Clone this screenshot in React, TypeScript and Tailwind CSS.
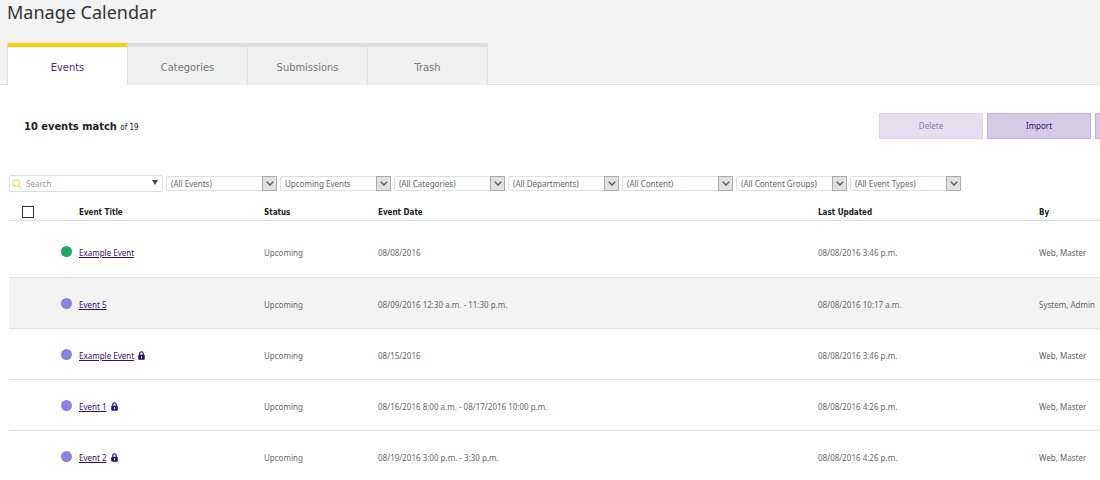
import { useState } from 'react'
import { clsx } from 'clsx'

type CalendarEvent = {
  id: number
  title: string
  date: string
  updated: string
  by: string
  live?: boolean
  locked?: boolean
}

const TABS = ['Events', 'Categories', 'Submissions', 'Trash']

// label for assistive tech + the option shown
const FILTERS = [
  { label: 'Events', value: '(All Events)' },
  { label: 'Time', value: 'Upcoming Events' },
  { label: 'Categories', value: '(All Categories)' },
  { label: 'Departments', value: '(All Departments)' },
  { label: 'Content', value: '(All Content)' },
  { label: 'Content groups', value: '(All Content Groups)' },
  { label: 'Event types', value: '(All Event Types)' },
]

const EVENTS: CalendarEvent[] = [
  { id: 1, title: 'Example Event', date: '08/08/2016', updated: '08/08/2016 3:46 p.m.', by: 'Web, Master', live: true },
  { id: 2, title: 'Event 5', date: '08/09/2016 12:30 a.m. - 11:30 p.m.', updated: '08/08/2016 10:17 a.m.', by: 'System, Admin' },
  { id: 3, title: 'Example Event', date: '08/15/2016', updated: '08/08/2016 3:46 p.m.', by: 'Web, Master', locked: true },
  { id: 4, title: 'Event 1', date: '08/16/2016 8:00 a.m. - 08/17/2016 10:00 p.m.', updated: '08/08/2016 4:26 p.m.', by: 'Web, Master', locked: true },
  { id: 5, title: 'Event 2', date: '08/19/2016 3:00 p.m. - 3:30 p.m.', updated: '08/08/2016 4:26 p.m.', by: 'Web, Master', locked: true },
]

function LockIcon() {
  return (
    <svg className="ml-1 inline-block h-[9px] w-[7px] align-[-1px]" viewBox="0 0 14 18" aria-label="Locked">
      <path d="M3.5 9V5a3.5 3.5 0 0 1 7 0v4" fill="none" stroke="#3a1a70" strokeWidth="2.4" />
      <rect x="0.5" y="7.5" width="13" height="10" rx="1.5" fill="#32106a" />
      <path d="M7 10.5v4" stroke="#fff" strokeWidth="2" />
    </svg>
  )
}

function Filter({ label, value }: { label: string; value: string }) {
  return (
    <div className="relative h-[15px] w-[111px] shrink-0">
      <select
        aria-label={label}
        defaultValue={value}
        className="block h-full w-full appearance-none rounded-xs border border-[#dedede] bg-white pr-4 pl-1 text-[8px] leading-[13px] text-[#666]"
      >
        <option>{value}</option>
      </select>
      <span className="pointer-events-none absolute top-0 right-0 flex h-full w-[15px] items-center justify-center border border-[#acacac] bg-[#e1e1e1]">
        <svg className="h-[5px] w-[8px]" viewBox="0 0 8 5" fill="none" stroke="#555" strokeWidth="1.3">
          <path d="M0.8 0.8 4 4 7.2 0.8" />
        </svg>
      </span>
    </div>
  )
}

export default function App() {
  const [tab, setTab] = useState('Events')
  const [search, setSearch] = useState('')

  return (
    <div className="overflow-hidden bg-white font-['Noto_Sans','Open_Sans',sans-serif] text-[#666]">
      <header className="border-b border-[#dedede] bg-[#f3f3f3]">
        <h1 className="pl-[7px] text-[18px] leading-[25px] text-[#333]">Manage Calendar</h1>

        {/* Tabs sit over the header's bottom border */}
        <nav className="mt-[18px] -mb-px flex pl-2">
          {TABS.map(t => (
            <button
              key={t}
              type="button"
              onClick={() => setTab(t)}
              className={clsx(
                "h-[42px] w-[120px] border-t-4 border-r border-r-[#dedede] pt-1 font-['DejaVu_Sans_Condensed','DejaVu_Sans',sans-serif] text-[11px]",
                t === tab
                  ? 'border-t-[#ffcc0a] bg-white text-[#4b2a85] shadow-[-1px_0_0_#dedede]'
                  : 'border-t-[#dcdcdc] bg-[#f0f0f0] text-[#777]',
              )}
            >
              {t}
            </button>
          ))}
        </nav>
      </header>

      <div className="flex items-center justify-between pt-7 pl-6">
        <h2 className="pt-0.5 font-['DejaVu_Sans_Condensed','DejaVu_Sans',sans-serif] text-[11px] leading-[16px] font-bold text-[#222]">
          10 events match <span className="text-[8px] font-normal">of 19</span>
        </h2>
        {/* Action bar runs past the right edge of the window */}
        <div className="flex w-[221px] gap-1 overflow-hidden text-[8px]">
          <button
            type="button"
            disabled
            className="h-[26px] w-[104px] shrink-0 border border-[#ded3ee] bg-[#e6dff0] text-[#9279ab]"
          >
            Delete
          </button>
          <button type="button" className="h-[26px] w-[104px] shrink-0 border border-[#c0b2e0] bg-[#d5cbe7] text-[#32106a]">
            Import
          </button>
          <button
            type="button"
            aria-label="Add event"
            className="h-[26px] w-[104px] shrink-0 border border-[#c0b2e0] bg-[#d5cbe7]"
          />
        </div>
      </div>

      <div className="mt-9 flex items-center gap-[3px] pl-[9px]">
        <div className="flex h-[17px] w-[154px] shrink-0 items-center rounded-xs border border-[#dedede] px-[2px]">
          <svg className="h-[10px] w-[10px] shrink-0" viewBox="0 0 10 10" fill="none" stroke="#ffdc5e" strokeWidth="1.2">
            <circle cx="4.2" cy="4.2" r="3.3" />
            <path d="m6.6 6.6 2.9 2.9" />
          </svg>
          <input
            type="text"
            aria-label="Search"
            placeholder="Search"
            value={search}
            onChange={e => setSearch(e.target.value)}
            className="ml-1 min-w-0 flex-1 text-[8px] leading-[13px] outline-none placeholder:text-[#999]"
          />
          <button type="button" aria-label="Search options" className="flex shrink-0 pr-0.5 pb-0.5">
            <svg className="h-[5px] w-[6px]" viewBox="0 0 6 5" fill="#444">
              <path d="M0 0h6L3 5z" />
            </svg>
          </button>
        </div>
        {FILTERS.map(f => (
          <Filter key={f.label} label={f.label} value={f.value} />
        ))}
      </div>

      <div className="mt-3 pl-[9px]">
        <table className="w-full table-fixed text-left text-[8px] leading-[12px]">
          <colgroup>
            <col className="w-[70px]" />
            <col className="w-[185px]" />
            <col className="w-[114px]" />
            <col />
            <col className="w-[221px]" />
            <col className="w-[61px]" />
          </colgroup>
          <thead className="font-['DejaVu_Sans_Condensed','DejaVu_Sans',sans-serif]">
            <tr className="h-[16px] border-b border-[#dedede] text-[#222] [&>th]:pt-0.5">
              <th className="pl-[13px]">
                <input
                  type="checkbox"
                  aria-label="Select all events"
                  className="mb-0.5 block h-3 w-3 appearance-none border border-[#333] bg-white checked:bg-[#32106a]"
                />
              </th>
              <th>Event Title</th>
              <th>Status</th>
              <th>Event Date</th>
              <th>Last Updated</th>
              <th>By</th>
            </tr>
          </thead>
          <tbody className="[&>tr>td]:h-[51px] [&>tr>td]:pt-1 [&>tr:first-child>td]:h-[57px] [&>tr:first-child>td]:pt-2">
            {EVENTS.map((event, i) => (
              <tr key={event.id} className={clsx('border-b border-[#dedede]', i === 1 && 'bg-[#f3f3f3]')}>
                <td>
                  <span
                    className={clsx(
                      'mr-[7px] mb-1 ml-auto block h-[11px] w-[11px] rounded-full',
                      event.live ? 'bg-[#1fa76b]' : 'bg-[#8785dc]',
                    )}
                  />
                </td>
                <td>
                  <a href="#" className="text-[#32106a] underline">
                    {event.title}
                  </a>
                  {event.locked && <LockIcon />}
                </td>
                <td>Upcoming</td>
                <td>{event.date}</td>
                <td>{event.updated}</td>
                <td className="whitespace-nowrap">{event.by}</td>
              </tr>
            ))}
          </tbody>
        </table>
      </div>
    </div>
  )
}
